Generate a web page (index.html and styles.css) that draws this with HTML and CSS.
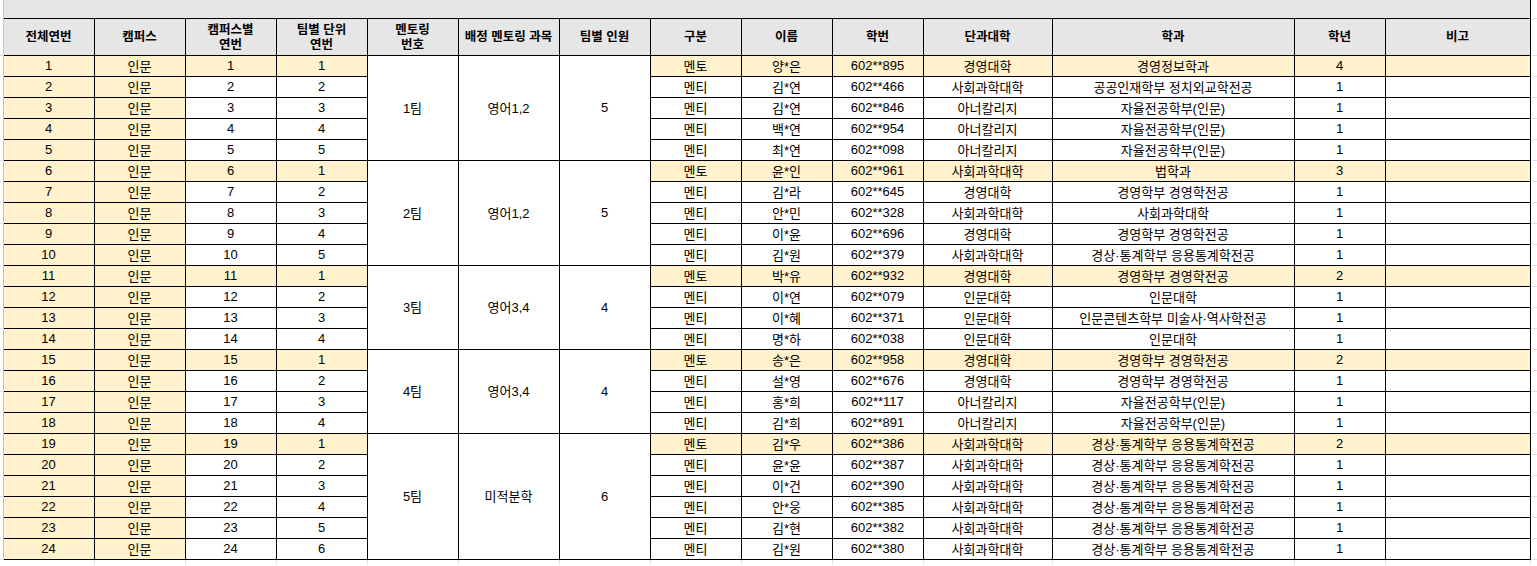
FILE: index.html
```html
<!DOCTYPE html>
<html lang="ko">
<head>
<meta charset="utf-8">
<title>멘토링 배정표</title>
<link rel="stylesheet" href="styles.css">
</head>
<body>
<table class="sheet">
<colgroup>
<col class="w-gl">
<col class="w91"><col class="w91"><col class="w91"><col class="w91"><col class="w91">
<col class="w101"><col class="w91"><col class="w91"><col class="w91"><col class="w91">
<col class="w129"><col class="w242"><col class="w91"><col class="w145">
<col class="w-gr">
</colgroup>
<tbody>
<tr class="band-row"><td class="gl"></td><td class="band" colspan="14"></td><td class="gr"></td></tr>
<tr class="head-row"><td class="gl"></td>
<th>전체연번</th><th>캠퍼스</th><th>캠퍼스별<br>연번</th><th>팀별 단위<br>연번</th><th>멘토링<br>번호</th><th>배정 멘토링 과목</th><th>팀별 인원</th><th>구분</th><th>이름</th><th>학번</th><th>단과대학</th><th>학과</th><th>학년</th><th>비고</th>
<td class="gr"></td></tr>

<tr class="r"><td class="gl"></td><td class="c n first">1</td><td class="c">인문</td><td class="c n">1</td><td class="c n">1</td><td rowspan="5">1팀</td><td rowspan="5">영어1,2</td><td rowspan="5" class="n">5</td><td class="c">멘토</td><td class="c">양*은</td><td class="c n">602**895</td><td class="c">경영대학</td><td class="c">경영정보학과</td><td class="c n">4</td><td class="c"></td><td class="gr"></td></tr>
<tr class="r"><td class="gl"></td><td class="c n first">2</td><td class="c">인문</td><td class="n">2</td><td class="n">2</td><td>멘티</td><td>김*연</td><td class="n">602**466</td><td>사회과학대학</td><td>공공인재학부 정치외교학전공</td><td class="n">1</td><td></td><td class="gr"></td></tr>
<tr class="r"><td class="gl"></td><td class="c n first">3</td><td class="c">인문</td><td class="n">3</td><td class="n">3</td><td>멘티</td><td>김*연</td><td class="n">602**846</td><td>아너칼리지</td><td>자율전공학부(인문)</td><td class="n">1</td><td></td><td class="gr"></td></tr>
<tr class="r"><td class="gl"></td><td class="c n first">4</td><td class="c">인문</td><td class="n">4</td><td class="n">4</td><td>멘티</td><td>백*연</td><td class="n">602**954</td><td>아너칼리지</td><td>자율전공학부(인문)</td><td class="n">1</td><td></td><td class="gr"></td></tr>
<tr class="r"><td class="gl"></td><td class="c n first">5</td><td class="c">인문</td><td class="n">5</td><td class="n">5</td><td>멘티</td><td>최*연</td><td class="n">602**098</td><td>아너칼리지</td><td>자율전공학부(인문)</td><td class="n">1</td><td></td><td class="gr"></td></tr>

<tr class="r"><td class="gl"></td><td class="c n first">6</td><td class="c">인문</td><td class="c n">6</td><td class="c n">1</td><td rowspan="5">2팀</td><td rowspan="5">영어1,2</td><td rowspan="5" class="n">5</td><td class="c">멘토</td><td class="c">윤*인</td><td class="c n">602**961</td><td class="c">사회과학대학</td><td class="c">법학과</td><td class="c n">3</td><td class="c"></td><td class="gr"></td></tr>
<tr class="r"><td class="gl"></td><td class="c n first">7</td><td class="c">인문</td><td class="n">7</td><td class="n">2</td><td>멘티</td><td>김*라</td><td class="n">602**645</td><td>경영대학</td><td>경영학부 경영학전공</td><td class="n">1</td><td></td><td class="gr"></td></tr>
<tr class="r"><td class="gl"></td><td class="c n first">8</td><td class="c">인문</td><td class="n">8</td><td class="n">3</td><td>멘티</td><td>안*민</td><td class="n">602**328</td><td>사회과학대학</td><td>사회과학대학</td><td class="n">1</td><td></td><td class="gr"></td></tr>
<tr class="r"><td class="gl"></td><td class="c n first">9</td><td class="c">인문</td><td class="n">9</td><td class="n">4</td><td>멘티</td><td>이*윤</td><td class="n">602**696</td><td>경영대학</td><td>경영학부 경영학전공</td><td class="n">1</td><td></td><td class="gr"></td></tr>
<tr class="r"><td class="gl"></td><td class="c n first">10</td><td class="c">인문</td><td class="n">10</td><td class="n">5</td><td>멘티</td><td>김*원</td><td class="n">602**379</td><td>사회과학대학</td><td>경상·통계학부 응용통계학전공</td><td class="n">1</td><td></td><td class="gr"></td></tr>

<tr class="r"><td class="gl"></td><td class="c n first">11</td><td class="c">인문</td><td class="c n">11</td><td class="c n">1</td><td rowspan="4">3팀</td><td rowspan="4">영어3,4</td><td rowspan="4" class="n">4</td><td class="c">멘토</td><td class="c">박*유</td><td class="c n">602**932</td><td class="c">경영대학</td><td class="c">경영학부 경영학전공</td><td class="c n">2</td><td class="c"></td><td class="gr"></td></tr>
<tr class="r"><td class="gl"></td><td class="c n first">12</td><td class="c">인문</td><td class="n">12</td><td class="n">2</td><td>멘티</td><td>이*연</td><td class="n">602**079</td><td>인문대학</td><td>인문대학</td><td class="n">1</td><td></td><td class="gr"></td></tr>
<tr class="r"><td class="gl"></td><td class="c n first">13</td><td class="c">인문</td><td class="n">13</td><td class="n">3</td><td>멘티</td><td>이*혜</td><td class="n">602**371</td><td>인문대학</td><td>인문콘텐츠학부 미술사·역사학전공</td><td class="n">1</td><td></td><td class="gr"></td></tr>
<tr class="r"><td class="gl"></td><td class="c n first">14</td><td class="c">인문</td><td class="n">14</td><td class="n">4</td><td>멘티</td><td>명*하</td><td class="n">602**038</td><td>인문대학</td><td>인문대학</td><td class="n">1</td><td></td><td class="gr"></td></tr>

<tr class="r"><td class="gl"></td><td class="c n first">15</td><td class="c">인문</td><td class="c n">15</td><td class="c n">1</td><td rowspan="4">4팀</td><td rowspan="4">영어3,4</td><td rowspan="4" class="n">4</td><td class="c">멘토</td><td class="c">송*은</td><td class="c n">602**958</td><td class="c">경영대학</td><td class="c">경영학부 경영학전공</td><td class="c n">2</td><td class="c"></td><td class="gr"></td></tr>
<tr class="r"><td class="gl"></td><td class="c n first">16</td><td class="c">인문</td><td class="n">16</td><td class="n">2</td><td>멘티</td><td>설*영</td><td class="n">602**676</td><td>경영대학</td><td>경영학부 경영학전공</td><td class="n">1</td><td></td><td class="gr"></td></tr>
<tr class="r"><td class="gl"></td><td class="c n first">17</td><td class="c">인문</td><td class="n">17</td><td class="n">3</td><td>멘티</td><td>홍*희</td><td class="n">602**117</td><td>아너칼리지</td><td>자율전공학부(인문)</td><td class="n">1</td><td></td><td class="gr"></td></tr>
<tr class="r"><td class="gl"></td><td class="c n first">18</td><td class="c">인문</td><td class="n">18</td><td class="n">4</td><td>멘티</td><td>김*희</td><td class="n">602**891</td><td>아너칼리지</td><td>자율전공학부(인문)</td><td class="n">1</td><td></td><td class="gr"></td></tr>

<tr class="r"><td class="gl"></td><td class="c n first">19</td><td class="c">인문</td><td class="c n">19</td><td class="c n">1</td><td rowspan="6">5팀</td><td rowspan="6">미적분학</td><td rowspan="6" class="n">6</td><td class="c">멘토</td><td class="c">김*우</td><td class="c n">602**386</td><td class="c">사회과학대학</td><td class="c">경상·통계학부 응용통계학전공</td><td class="c n">2</td><td class="c"></td><td class="gr"></td></tr>
<tr class="r"><td class="gl"></td><td class="c n first">20</td><td class="c">인문</td><td class="n">20</td><td class="n">2</td><td>멘티</td><td>윤*윤</td><td class="n">602**387</td><td>사회과학대학</td><td>경상·통계학부 응용통계학전공</td><td class="n">1</td><td></td><td class="gr"></td></tr>
<tr class="r"><td class="gl"></td><td class="c n first">21</td><td class="c">인문</td><td class="n">21</td><td class="n">3</td><td>멘티</td><td>이*건</td><td class="n">602**390</td><td>사회과학대학</td><td>경상·통계학부 응용통계학전공</td><td class="n">1</td><td></td><td class="gr"></td></tr>
<tr class="r"><td class="gl"></td><td class="c n first">22</td><td class="c">인문</td><td class="n">22</td><td class="n">4</td><td>멘티</td><td>안*웅</td><td class="n">602**385</td><td>사회과학대학</td><td>경상·통계학부 응용통계학전공</td><td class="n">1</td><td></td><td class="gr"></td></tr>
<tr class="r"><td class="gl"></td><td class="c n first">23</td><td class="c">인문</td><td class="n">23</td><td class="n">5</td><td>멘티</td><td>김*현</td><td class="n">602**382</td><td>사회과학대학</td><td>경상·통계학부 응용통계학전공</td><td class="n">1</td><td></td><td class="gr"></td></tr>
<tr class="r"><td class="gl"></td><td class="c n first">24</td><td class="c">인문</td><td class="n">24</td><td class="n">6</td><td>멘티</td><td>김*원</td><td class="n">602**380</td><td>사회과학대학</td><td>경상·통계학부 응용통계학전공</td><td class="n">1</td><td></td><td class="gr"></td></tr>

<tr class="tail-row"><td class="gl tail"></td>
<td class="tail"></td><td class="tail"></td><td class="tail"></td><td class="tail"></td><td class="tail"></td><td class="tail"></td><td class="tail"></td><td class="tail"></td><td class="tail"></td><td class="tail"></td><td class="tail"></td><td class="tail"></td><td class="tail"></td><td class="tail"></td>
<td class="gr tail"></td></tr>
</tbody>
</table>
</body>
</html>
```

FILE: styles.css
```css
html, body {
  margin: 0;
  padding: 0;
  background: #ffffff;
}

body {
  font-family: "Liberation Sans", "Noto Sans CJK KR", sans-serif;
  font-size: 13px;
  color: #000000;
  overflow: hidden;
}

.sheet {
  border-collapse: collapse;
  table-layout: fixed;
  width: 1537px;
}

.w-gl { width: 3px; }
.w91 { width: 91px; }
.w101 { width: 101px; }
.w129 { width: 129px; }
.w242 { width: 242px; }
.w145 { width: 145px; }
.w-gr { width: 7px; }

.sheet td,
.sheet th {
  border: 1px solid #000000;
  padding: 1px 0 0 0;
  text-align: center;
  vertical-align: middle;
  white-space: nowrap;
  overflow: hidden;
  line-height: 15px;
}

.sheet th {
  background: #e7e6e6;
  font-weight: bold;
  font-size: 12.5px;
  padding-top: 2px;
}

.sheet th:nth-child(2) {
  border-left-color: #c4c4c4;
}

.band-row { height: 18px; }
.head-row { height: 37px; }
.r { height: 21px; }
.tail-row { height: 6px; }

.sheet td.band {
  background: #e7e6e6;
  border-top: none;
  border-left-color: #c4c4c4;
  padding: 0;
}

.sheet td.c {
  background: #fff2cc;
}

.sheet td.first {
  border-left-color: #c4c4c4;
}

.sheet td.n {
  font-size: 13px;
  padding: 0;
}

.sheet td.gl {
  border-top: none;
  border-left: none;
  border-right: none;
  border-bottom: 1px solid #dcdcdc;
  padding: 0;
}

.sheet td.gr {
  border-top: none;
  border-right: none;
  border-left: none;
  border-bottom: 1px solid #e2e2e2;
  padding: 0;
}

.sheet td.tail {
  border-top: none;
  border-bottom: none;
  border-left: none;
  border-right: 1px solid #e2e2e2;
  padding: 0;
}

.sheet td.gl.tail,
.sheet td.gr.tail {
  border: none;
}
```
